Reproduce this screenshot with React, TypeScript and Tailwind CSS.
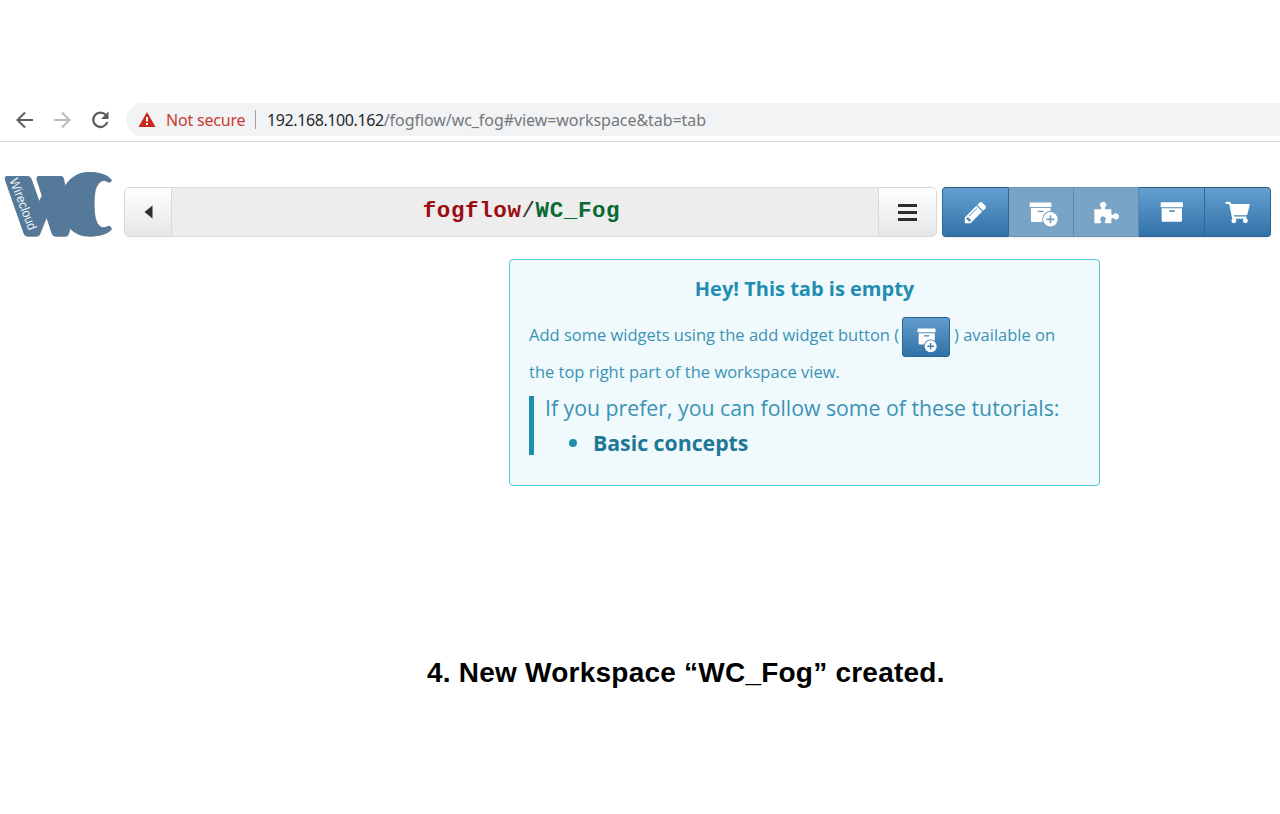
import type { ReactNode } from "react";

function BrowserBar() {
  return (
    <div className="flex h-[39px] items-start border-b border-[#d9dbe0] bg-white font-['Noto_Sans',sans-serif] text-[16px] leading-[33px]">
      <svg className="h-[33px] w-[126px] shrink-0" viewBox="0 0 126 33" fill="none" strokeWidth="2">
        <path d="M33 17H18M25 9.5L17.5 17L25 24.5" stroke="#5a5d61" />
        <path d="M54 17H69M62 9.5L69.500 17L62 24.500" stroke="#b9bbbe" />
        <path d="M106 12.200A7.200 7.200 0 1 0 107.300 19" stroke="#5a5d61" strokeWidth="2.300" />
        <path d="M108.500 8.500V16H101Z" fill="#5a5d61" />
      </svg>
      <div className="flex h-[33px] flex-1 items-center rounded-l-full bg-[#f1f3f4] pl-[12px]">
        <svg className="mr-[10px] h-[17px] w-[18px] shrink-0" viewBox="0 0 18 17">
          <path d="M9 1L17.500 16H.5Z" fill="#c9291c" />
          <path d="M9 6v4.500M9 12v2" stroke="#fff" strokeWidth="2" />
        </svg>
        <span className="w-[89px] whitespace-nowrap pt-[2px] tracking-[-0.2px] text-[#cc3b30]">Not secure</span>
        <span className="mr-[11px] h-[19px] w-px bg-[#9da0a4]" />
        <span className="whitespace-nowrap pt-[2px] tracking-[-0.06px] text-[#75787c]">
          <span className="tracking-[-0.4px] text-[#26282b]">192.168.100.162</span>/fogflow/wc_fog#view=workspace&amp;tab=tab
        </span>
      </div>
    </div>
  );
}

const LOGO_SHAPE =
  "M20 21H82Q90 21 93 29L117 97Q121 88 125 80L110 33Q107 22 117 21H182Q188 21 190 28L195 50C214 20 240 8 271 9C302 9 326 20 334 33Q332 41 325 40C309 30 300 36 294 44C283 58 282 83 282 104C282 133 285 156 296 168C303 178 315 176 324 170Q331 169 334 180C325 193 299 202 269 202C241 202 221 192 210 178L204 196Q202 202 195 202H166Q158 202 155 194L139 145L118 196Q115 202 108 202H83Q74 202 71 194L15 34Q12 22 20 21Z";

function Logo() {
  return (
    <svg className="h-[70px] w-[113px]" viewBox="0 0 339 210">
      <path d={LOGO_SHAPE} fill="#4a4f57" opacity=".7" transform="translate(2 1)" />
      <path d={LOGO_SHAPE} fill="#557998" />
      <text
        transform="translate(28 34) rotate(69)"
        fontFamily="Liberation Sans, sans-serif"
        fontSize="39"
        textLength="163"
        lengthAdjust="spacingAndGlyphs"
        fill="#edf3f8"
      >
        Wirecloud
      </text>
    </svg>
  );
}

function BoxPlus({ mark, cx, cy, className }: { mark: string; cx: number; cy: number; className: string }) {
  return (
    <svg className={className} viewBox="0 0 88 90">
      <path d="M4 1H66Q68 1 68 3V13Q68 15 66 15H4Q2 15 2 13V3Q2 1 4 1ZM6 18H65V60H9Q6 60 6 57Z" fill="#fff" />
      <path d="M28 28H43" stroke={mark} strokeWidth="4" strokeLinecap="round" />
      <circle cx={cx} cy={cy} r="25" fill={mark} />
      <circle cx={cx} cy={cy} r="22" fill="#fff" />
      <path d={`M${cx - 12} ${cy}h24M${cx} ${cy - 12}v24`} stroke={mark} strokeWidth="5" />
    </svg>
  );
}

function ToolButton({ children, disabled = false, className = "" }: { children: ReactNode; disabled?: boolean; className?: string }) {
  return (
    <button
      className={`flex h-full items-center justify-center border-y border-r ${
        disabled
          ? "border-y-[#6697bb] border-r-[#558bb2] bg-[#7aa4c6]"
          : "border-y-[#285f8c] border-r-[#2b6b9b] bg-linear-to-b from-[#649fd0] to-[#3172a8]"
      } ${className}`}
    >
      {children}
    </button>
  );
}

function Toolbar() {
  return (
    <div className="mt-[45px] ml-[5px] flex h-[50px] w-[329px] drop-shadow-[0_1px_1px_rgba(0,0,0,0.08)]">
      <ToolButton className="w-[67px] rounded-l-[4px] border-l border-l-[#2b6b9b]">
        <svg className="h-[25px] w-[25px]" viewBox="0 0 1792 1792" fill="#fff">
          <path d="M491 1536l91-91-235-235-91 91v107h128v128h107zm523-928q0-22-22-22-10 0-17 7l-542 542q-7 7-7 17 0 22 22 22 10 0 17-7l542-542q7-7 7-17zm-54-192l416 416-832 832h-416v-416zm683 96q0 53-37 90l-166 166-416-416 166-165q36-38 90-38 53 0 91 38l235 234q37 39 37 91z" />
        </svg>
      </ToolButton>
      <ToolButton disabled className="w-[65px]">
        <BoxPlus mark="#759fc1" cx={65} cy={52} className="mt-[9px] ml-[5px] h-[30px] w-[29px]" />
      </ToolButton>
      <ToolButton disabled className="w-[65px]">
        <svg className="mt-[1px] h-[24px] w-[27px]" viewBox="0 0 81 72" fill="#fff">
          <path d="M4 25H22Q27 24 24 19Q19 14 21 8Q25 2 31 2Q38 3 40 9Q41 15 36 19Q33 24 38 25H55V39Q57 44 62 40Q67 35 73 38Q79 41 78 48Q76 55 70 56Q64 55 61 52Q56 49 55 54V67H38Q33 66 36 60Q40 57 38 51Q35 46 29 46Q23 47 21 53Q21 57 24 61Q27 66 22 67H4Z" />
        </svg>
      </ToolButton>
      <ToolButton className="w-[66px]">
        <svg className="h-[22px] w-[24px]" viewBox="0 0 72 66">
          <path d="M4 4H67Q69 4 69 6V17Q69 19 67 19H4Q2 19 2 17V6Q2 4 4 4ZM5 22H66V59Q66 62 63 62H8Q5 62 5 59Z" fill="#fff" />
          <path d="M29 30H43" stroke="#4b83b2" strokeWidth="4" strokeLinecap="round" />
        </svg>
      </ToolButton>
      <ToolButton className="w-[66px] rounded-r-[4px]">
        <svg className="h-[23px] w-[25px]" viewBox="0 0 76 70" fill="#fff">
          <path d="M4 2H14Q18 3 19 9H73Q76 9 75 12L68 41Q67 43 64 43H27L28 47H65V54H25Q22 54 21 51L13 9H4Q1 8 1 5Q1 2 4 2Z" />
          <circle cx="27" cy="60" r="7.500" />
          <circle cx="62" cy="60" r="7.500" />
        </svg>
      </ToolButton>
    </div>
  );
}

function Header() {
  return (
    <header className="flex h-[95px] items-start">
      <div className="w-[124px] pt-[27px]"><Logo /></div>
      <div className="mt-[45px] flex h-[50px] w-[813px] overflow-hidden rounded-[5px] border border-[#d9d9d9] bg-[#ededed]">
        <button className="flex w-[47px] items-center justify-center border-r border-[#d9d9d9] bg-linear-to-b from-white to-[#e6e6e6]">
          <svg className="h-[14px] w-[9px]" viewBox="0 0 9 14"><path d="M8.500 .5V13.500L.5 7Z" fill="#2d2d2d" /></svg>
        </button>
        <div className="flex-1 pt-[8px] pr-[7px] text-center font-['Liberation_Mono',monospace] text-[22.5px] font-bold leading-[30px] tracking-[0.6px]">
          <span className="text-[#9b0c12]">fogflow</span>
          <span className="font-normal text-[#333]">/</span>
          <span className="text-[#086a35]">WC_Fog</span>
        </div>
        <button className="flex w-[58px] items-center justify-center border-l border-[#d9d9d9] bg-linear-to-b from-white to-[#e6e6e6]">
          <svg className="h-[17px] w-[19px]" viewBox="0 0 19 17"><path d="M0 1.500H19M0 8.500H19M0 15.500H19" stroke="#2d2d2d" strokeWidth="3" /></svg>
        </button>
      </div>
      <Toolbar />
    </header>
  );
}

function EmptyNotice() {
  return (
    <section className="mt-[22px] ml-[509px] h-[227px] w-[591px] rounded-[4px] border border-[#4fc9dc] bg-[#f0f9fc] px-[19px] pt-[14px] font-['Open_Sans',sans-serif] text-[#3a93b5]">
      <h1 className="text-center text-[20px] font-bold leading-[30px] text-[#218db0]">Hey! This tab is empty</h1>
      <div className="mt-[13px] flex h-[41px] items-start text-[16.5px] leading-[36px] whitespace-nowrap">
        <span className="w-[373px]">Add some widgets using the add widget button (</span>
        <span className="flex h-[40px] w-[48px] items-start rounded-[3px] border border-[#286491] bg-linear-to-b from-[#629ccd] to-[#3172a8] pt-[10px] pl-[14px]">
          <BoxPlus mark="#3c7bae" cx={50} cy={66} className="h-[25px] w-[24px]" />
        </span>
        <span className="ml-[4px]">) available on</span>
      </div>
      <p className="text-[16.5px] leading-[28px]">the top right part of the workspace view.</p>
      <blockquote className="mt-[10px] h-[59px] border-l-[5px] border-[#208dac] pl-[11px] text-[21.25px]">
        <p className="h-[31px] leading-[23px] whitespace-nowrap">If you prefer, you can follow some of these tutorials:</p>
        <ul className="flex items-center leading-[31px]">
          <li className="flex items-center font-bold text-[#1c7895]">
            <span className="mr-[16px] ml-[24px] h-[8px] w-[8px] rounded-full bg-[#208dac]" />
            Basic concepts
          </li>
        </ul>
      </blockquote>
    </section>
  );
}

export default function App() {
  return (
    <main className="h-[814px] w-[1280px] overflow-hidden bg-white pt-[103px]">
      <BrowserBar />
      <Header />
      <EmptyNotice />
      <p className="mt-[167px] ml-[427px] font-['Liberation_Sans',sans-serif] text-[28px] font-bold leading-[40px] tracking-[0.23px] whitespace-nowrap text-black">
        4. New Workspace “WC_Fog” created.
      </p>
    </main>
  );
}
